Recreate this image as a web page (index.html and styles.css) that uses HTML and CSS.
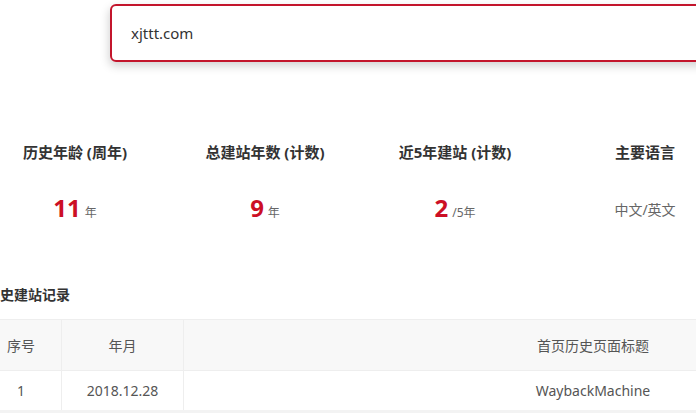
FILE: index.html
```html
<!DOCTYPE html>
<html>
<head>
  <meta charset="utf-8" />
  <title>xjttt.com 建站历史</title>
  <meta name="viewport" content="width=device-width, initial-scale=1">
  <link rel="stylesheet" href="styles.css">
</head>
<body>
  <div class="page">
    <div class="search">
      <div class="search-box">xjttt.com</div>
    </div>

    <div class="stats">
      <div class="stat">
        <div class="stat-label">历史年龄 (周年)</div>
        <div class="stat-value"><b>11</b><span>年</span></div>
      </div>
      <div class="stat">
        <div class="stat-label">总建站年数 (计数)</div>
        <div class="stat-value"><b>9</b><span>年</span></div>
      </div>
      <div class="stat">
        <div class="stat-label">近5年建站 (计数)</div>
        <div class="stat-value"><b>2</b><span>/5年</span></div>
      </div>
      <div class="stat">
        <div class="stat-label">主要语言</div>
        <div class="stat-value lang">中文/英文</div>
      </div>
    </div>

    <h2 class="section-title">历史建站记录</h2>

    <table class="history">
      <thead>
        <tr>
          <th class="col-no">序号</th>
          <th class="col-date">年月</th>
          <th class="col-title">首页历史页面标题</th>
        </tr>
      </thead>
      <tbody>
        <tr>
          <td>1</td>
          <td>2018.12.28</td>
          <td>WaybackMachine</td>
        </tr>
      </tbody>
    </table>
  </div>
</body>
</html>
```

FILE: styles.css
```css
html, body {
  margin: 0;
  padding: 0;
  background: #fff;
  overflow: hidden;
}

body {
  font-family: "Noto Sans", "Noto Sans CJK SC", sans-serif;
  color: #333;
}

.page {
  margin-left: -20px;
  width: 1060px;
}

.search {
  padding-top: 4px;
  padding-left: 130px;
}

.search-box {
  box-sizing: border-box;
  width: 760px;
  height: 58px;
  border: 2px solid #c3152c;
  border-radius: 6px;
  padding-left: 19px;
  font-size: 15px;
  line-height: 54px;
  color: #333;
  box-shadow: -1px 4px 10px rgba(0, 0, 0, 0.18);
}

.stats {
  display: grid;
  grid-template-columns: repeat(4, 190px);
  margin-top: 79px;
}

.stat {
  text-align: center;
}

.stat-label {
  font-size: 15px;
  font-weight: bold;
  line-height: 22px;
  color: #333;
}

.stat-value {
  margin-top: 29px;
  height: 32px;
  line-height: 32px;
  color: #666;
}

.stat-value b {
  font-size: 24px;
  font-weight: bold;
  color: #cc0f25;
}

.stat-value span {
  font-size: 12px;
  margin-left: 4px;
}

.stat-value.lang {
  font-size: 14px;
  padding-top: 2px;
}

.section-title {
  margin: 59px 0 0 6px;
  font-size: 14px;
  line-height: 20px;
  color: #333;
}

.history {
  margin-top: 14px;
  width: 1023px;
  table-layout: fixed;
  border-collapse: collapse;
  border-bottom: 4px solid #f3f3f3;
  font-size: 14px;
  color: #555;
}

.history th,
.history td {
  border-left: 1px solid #eee;
  border-right: 1px solid #eee;
  border-top: 1px solid #eee;
  text-align: center;
  font-weight: normal;
  padding: 0;
}

.history th {
  height: 50px;
  background: #f8f8f8;
}

.history td {
  height: 39px;
}

.col-no {
  width: 80px;
}

.col-date {
  width: 121px;
}
```
